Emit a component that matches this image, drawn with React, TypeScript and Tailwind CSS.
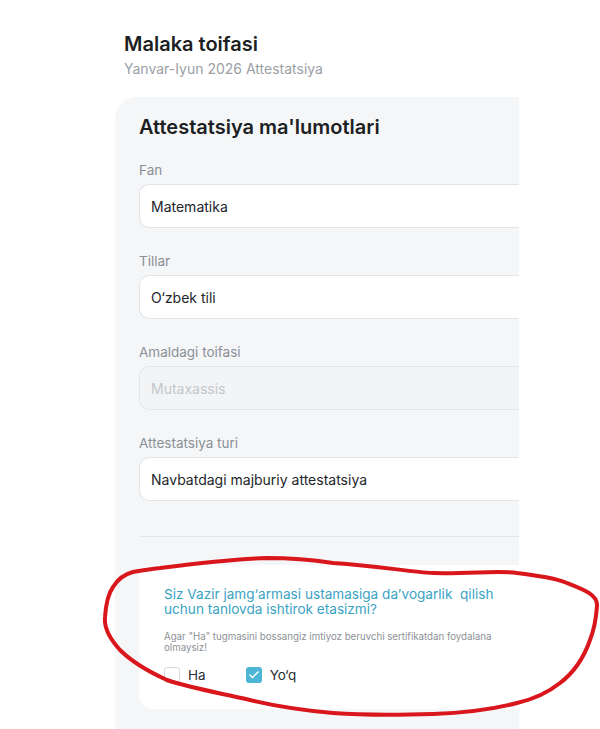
import { Check } from 'lucide-react';

const fields = [
  { label: 'Fan', value: 'Matematika', disabled: false },
  { label: 'Tillar', value: 'O‘zbek tili', disabled: false },
  { label: 'Amaldagi toifasi', value: 'Mutaxassis', disabled: true },
  { label: 'Attestatsiya turi', value: 'Navbatdagi majburiy attestatsiya', disabled: false },
];

export default function App() {
  return (
    <div className="relative h-[729px] w-[600px] overflow-hidden bg-white font-['Inter',sans-serif] text-[#1f2328]">
      <div className="w-[519px] overflow-hidden">
        <div className="pl-[124px] pt-[31px]">
          <h1 className="text-[20px] font-semibold leading-[26px] text-[#1c1f23]">Malaka toifasi</h1>
          <p className="mt-[3px] text-[14px] leading-[18px] text-[#9aa0a6]">Yanvar-Iyun 2026 Attestatsiya</p>
        </div>

        <div className="ml-[115px] mt-[19px] h-[700px] w-[460px] rounded-l-[22px] bg-[#f5f6f8] pl-[24px] pt-[16px]">
          <h2 className="text-[20px] font-semibold leading-[28px] text-[#1c1f23]">Attestatsiya ma'lumotlari</h2>

          <div className="mt-[20px] flex flex-col gap-[24px]">
            {fields.map((f) => (
              <div key={f.label}>
                <div className="text-[13.5px] leading-[18px] text-[#8a9097]">{f.label}</div>
                <div
                  className={
                    f.disabled
                      ? 'mt-[5px] flex h-[44px] items-center rounded-l-[10px] border border-r-0 border-[#e4e6ea] bg-[#f3f4f6] pl-[11px] text-[14px] text-[#c3c7cc]'
                      : 'mt-[5px] flex h-[44px] items-center rounded-l-[10px] border border-r-0 border-[#e2e4e8] bg-white pl-[11px] text-[14px] text-[#22262a]'
                  }
                >
                  {f.value}
                </div>
              </div>
            ))}
          </div>

          <div className="mt-[35px] h-px bg-[#e3e5e8]" />

          <div className="mt-[28px] rounded-l-[14px] bg-white pb-[24px] pl-[25px] pt-[22px]">
            <p className="w-[345px] text-[13.6px] leading-[15px] text-[#3aa3c4]">
              Siz Vazir jamg‘armasi ustamasiga da’vogarlik&nbsp; qilish uchun tanlovda ishtirok etasizmi?
            </p>
            <p className="mt-[14px] w-[345px] text-[9.7px] leading-[11px] text-[#8c9196]">
              Agar "Ha" tugmasini bossangiz imtiyoz beruvchi sertifikatdan foydalana olmaysiz!
            </p>
            <div className="mt-[12px] flex items-center">
              <label className="flex items-center gap-[8px]">
                <span className="h-[16px] w-[16px] rounded-[3px] border border-[#d6d9dd] bg-white" />
                <span className="text-[13.5px] text-[#2a2e33]">Ha</span>
              </label>
              <label className="ml-[40px] flex items-center gap-[8px]">
                <span className="flex h-[16px] w-[16px] items-center justify-center rounded-[3px] bg-[#4db6d6]">
                  <Check size={12} strokeWidth={3} color="white" />
                </span>
                <span className="text-[13.5px] text-[#2a2e33]">Yo‘q</span>
              </label>
            </div>
          </div>
        </div>
      </div>

      <svg className="pointer-events-none absolute left-0 top-0" width="600" height="729" viewBox="0 0 600 729">
        <path
          d="M133 572 C145 570 150 569 160 568 C200 563 235 559 267 558 C300 558 320 561 333 563 C380 566 410 572 433 573 C470 574 500 570 517 573 C540 576 555 578 567 583 C585 590 598 595 597 606 C596 620 594 630 590 640 C583 660 572 674 560 683 C545 695 530 700 517 703 C490 710 460 713 433 714 C400 715 360 715 333 713 C300 710 275 706 250 700 C220 693 190 688 167 680 C145 670 130 660 120 650 C108 637 104 627 105 617 C106 603 108 594 113 587 C118 579 125 574 133 572 Z"
          fill="none"
          stroke="#d9161c"
          strokeWidth="4"
          strokeLinejoin="round"
        />
      </svg>
    </div>
  );
}
